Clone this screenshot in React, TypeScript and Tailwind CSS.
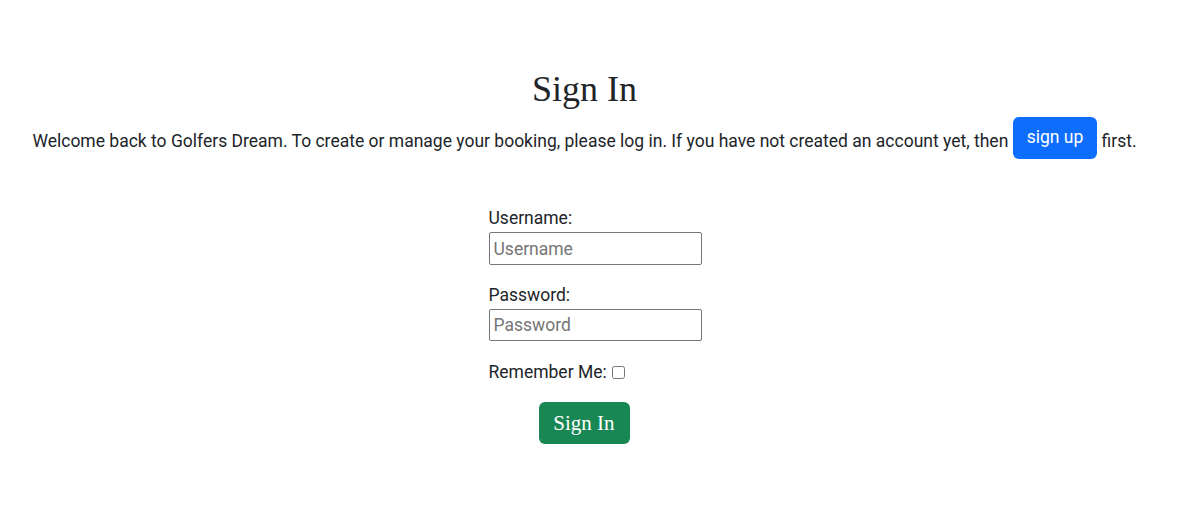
export default function App() {
  return (
    <div className="min-h-screen bg-white text-[#212529] font-['Roboto',sans-serif] text-[17.5px]">
      <div className="pr-[21px]">
        {/* Heading */}
        <h1 className="pt-[68px] text-center font-['Liberation_Serif',serif] text-[36px] leading-[1.2]">
          Sign In
        </h1>
        {/* Intro */}
        <p className="mt-[6px] text-center leading-[1.5]">
          Welcome back to Golfers Dream. To create or manage your booking, please log in. If you have not created an account yet, then{" "}
          <a
            href="#"
            className="inline-block align-[4px] rounded-md bg-[#0d6efd] px-[14px] pt-[7px] pb-[9px] leading-[1.5] text-white"
          >
            sign up
          </a>{" "}
          first.
        </p>
      </div>
      {/* Form */}
      <form className="mx-auto mt-[46px] w-[213px]">
        <label htmlFor="username" className="block leading-[26px]">Username:</label>
        <input
          id="username"
          type="text"
          placeholder="Username"
          className="mt-px block h-[33px] w-[213px] rounded-[2px] border border-[#767676] px-1 placeholder:text-[#757575]"
        />
        <label htmlFor="password" className="mt-[17px] block leading-[26px]">Password:</label>
        <input
          id="password"
          type="password"
          placeholder="Password"
          className="mt-px block h-[32px] w-[213px] rounded-[2px] border border-[#767676] px-1 placeholder:text-[#757575]"
        />
        <div className="mt-[18px] flex items-center leading-[26px]">
          <label htmlFor="remember">Remember Me:</label>
          <input id="remember" type="checkbox" className="ml-[5px] h-[13px] w-[13px]" />
        </div>
        <button
          type="submit"
          className="mt-[17px] ml-[50px] h-[42px] w-[91px] rounded-md bg-[#198754] font-['Liberation_Serif',serif] text-[21px] text-white"
        >
          Sign In
        </button>
      </form>
    </div>
  );
}
